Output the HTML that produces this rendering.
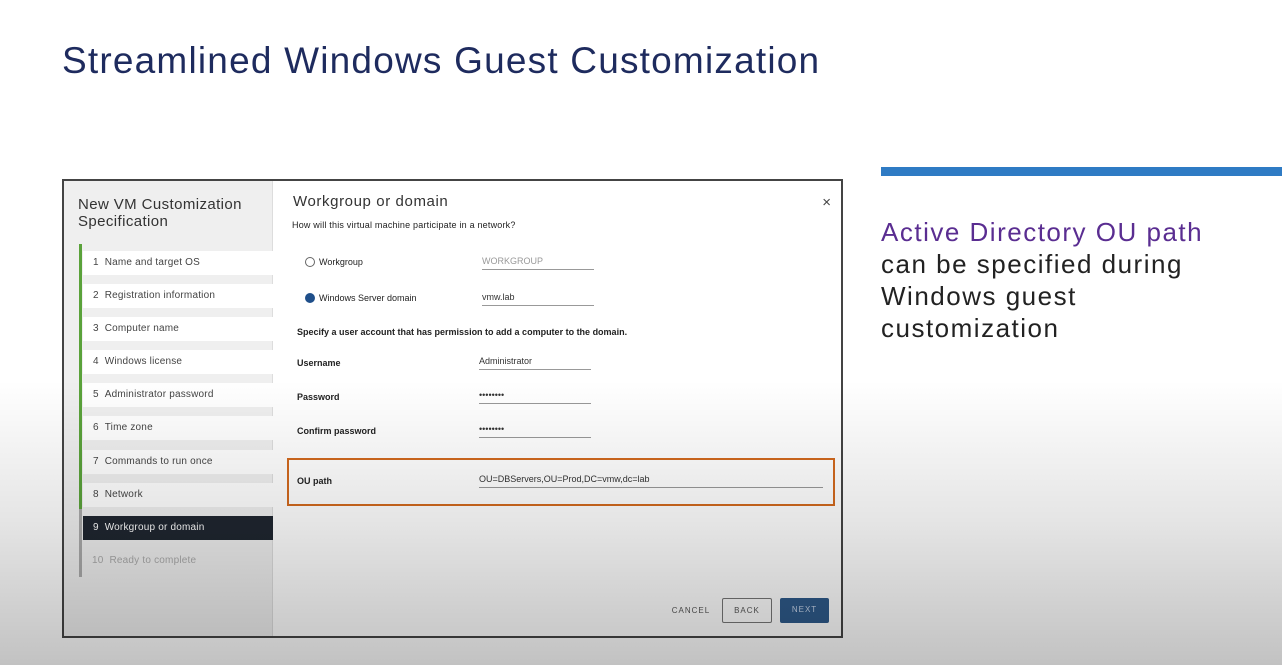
<!DOCTYPE html>
<html><head><meta charset="utf-8"><style>
*{box-sizing:border-box;margin:0;padding:0}
body{width:1282px;height:665px;overflow:hidden;background:#fff;font-family:"Liberation Sans",sans-serif;position:relative}
.abs{position:absolute}
h1{position:absolute;left:62px;top:40px;font-size:37px;font-weight:normal;color:#1e2b5e;letter-spacing:1.2px}
.bar{left:881px;top:167px;width:401px;height:9px;background:#2f7bc4}
.side{left:881px;top:216px;font-size:26px;line-height:32px;color:#222;letter-spacing:1.5px}
.side span{color:#5a2d91}
.dlg{left:62px;top:179px;width:781px;height:459px;border:2px solid #444;background:#fff}
.nav{left:0;top:0;width:209px;height:455px;background:#efefef;border-right:1px solid #ddd}
.nav .t{position:absolute;left:14px;top:15px;font-size:15px;line-height:17px;color:#333;letter-spacing:0.4px}
.vl{position:absolute;left:15px;top:63px;width:3px;height:333px;background:#aaa}
.vg{position:absolute;left:15px;top:63px;width:3px;height:265px;background:#5aa23a}
.it{position:absolute;left:19px;width:190px;height:24px;background:#fff;font-size:10px;color:#444;line-height:24px;padding-left:10px;letter-spacing:0.2px}
.it.act{background:#1f2630;color:#fff}
.it.dis{background:transparent;color:#aaa;padding-left:9px}
.main{left:210px;top:0;right:0;bottom:0}
.lbl{position:absolute;font-size:9px;color:#222}
.b{font-weight:bold}
.inp{position:absolute;border-bottom:1px solid #999;font-size:9px;color:#333;height:14px}
.radio{position:absolute;width:10px;height:10px;border-radius:50%;border:1px solid #666}
.btn{position:absolute;font-size:8px;letter-spacing:1px;text-align:center;line-height:24px;height:25px}
.shade{position:absolute;left:0;top:0;width:1282px;height:665px;pointer-events:none;background:linear-gradient(to bottom,rgba(0,0,0,0) 0,rgba(0,0,0,0) 380px,rgba(0,0,0,0.1) 520px,rgba(0,0,0,0.24) 665px)}
</style></head><body>
<h1>Streamlined Windows Guest Customization</h1>
<div class="abs bar"></div>
<div class="abs side"><span>Active Directory OU path</span><br>can be specified during<br>Windows guest<br>customization</div>
<div class="abs dlg">
 <div class="abs nav">
  <div class="t">New VM Customization<br>Specification</div>
  <div class="vl"></div><div class="vg"></div>
  <div class="it" style="top:70px">1&nbsp;&nbsp;Name and target OS</div>
  <div class="it" style="top:103px">2&nbsp;&nbsp;Registration information</div>
  <div class="it" style="top:136px">3&nbsp;&nbsp;Computer name</div>
  <div class="it" style="top:169px">4&nbsp;&nbsp;Windows license</div>
  <div class="it" style="top:202px">5&nbsp;&nbsp;Administrator password</div>
  <div class="it" style="top:235px">6&nbsp;&nbsp;Time zone</div>
  <div class="it" style="top:269px">7&nbsp;&nbsp;Commands to run once</div>
  <div class="it" style="top:302px">8&nbsp;&nbsp;Network</div>
  <div class="it act" style="top:335px">9&nbsp;&nbsp;Workgroup or domain</div>
  <div class="it dis" style="top:368px">10&nbsp;&nbsp;Ready to complete</div>
 </div>
 <div class="abs main">
  <div class="abs" style="left:19px;top:12px;font-size:15px;color:#333;letter-spacing:0.6px">Workgroup or domain</div>
  <div class="abs" style="right:10px;top:13px;font-size:15px;color:#444">×</div>
  <div class="lbl" style="left:18px;top:39px;letter-spacing:0.2px">How will this virtual machine participate in a network?</div>
  <div class="radio" style="left:31px;top:76px"></div>
  <div class="lbl" style="left:45px;top:76px">Workgroup</div>
  <div class="inp" style="left:208px;top:75px;width:112px;color:#999">WORKGROUP</div>
  <div class="radio" style="left:31px;top:112px;background:#1f4f8a;border-color:#1f4f8a"></div>
  <div class="lbl" style="left:45px;top:112px">Windows Server domain</div>
  <div class="inp" style="left:208px;top:111px;width:112px">vmw.lab</div>
  <div class="lbl b" style="left:23px;top:146px">Specify a user account that has permission to add a computer to the domain.</div>
  <div class="lbl b" style="left:23px;top:177px">Username</div>
  <div class="inp" style="left:205px;top:175px;width:112px">Administrator</div>
  <div class="lbl b" style="left:23px;top:211px">Password</div>
  <div class="inp" style="left:205px;top:209px;width:112px">••••••••</div>
  <div class="lbl b" style="left:23px;top:245px">Confirm password</div>
  <div class="inp" style="left:205px;top:243px;width:112px">••••••••</div>
  <div class="abs" style="left:13px;top:277px;width:548px;height:48px;border:2px solid #d2691e"></div>
  <div class="lbl b" style="left:23px;top:295px">OU path</div>
  <div class="inp" style="left:205px;top:293px;width:344px">OU=DBServers,OU=Prod,DC=vmw,dc=lab</div>
  <div class="btn" style="left:394px;top:418px;width:46px;color:#555">CANCEL</div>
  <div class="btn" style="left:448px;top:417px;width:50px;border:1px solid #777;border-radius:2px;color:#555">BACK</div>
  <div class="btn" style="left:506px;top:417px;width:49px;background:#2e5a8a;border-radius:2px;color:#c8d6ea">NEXT</div>
 </div>
</div>
<div class="shade"></div>
</body></html>
